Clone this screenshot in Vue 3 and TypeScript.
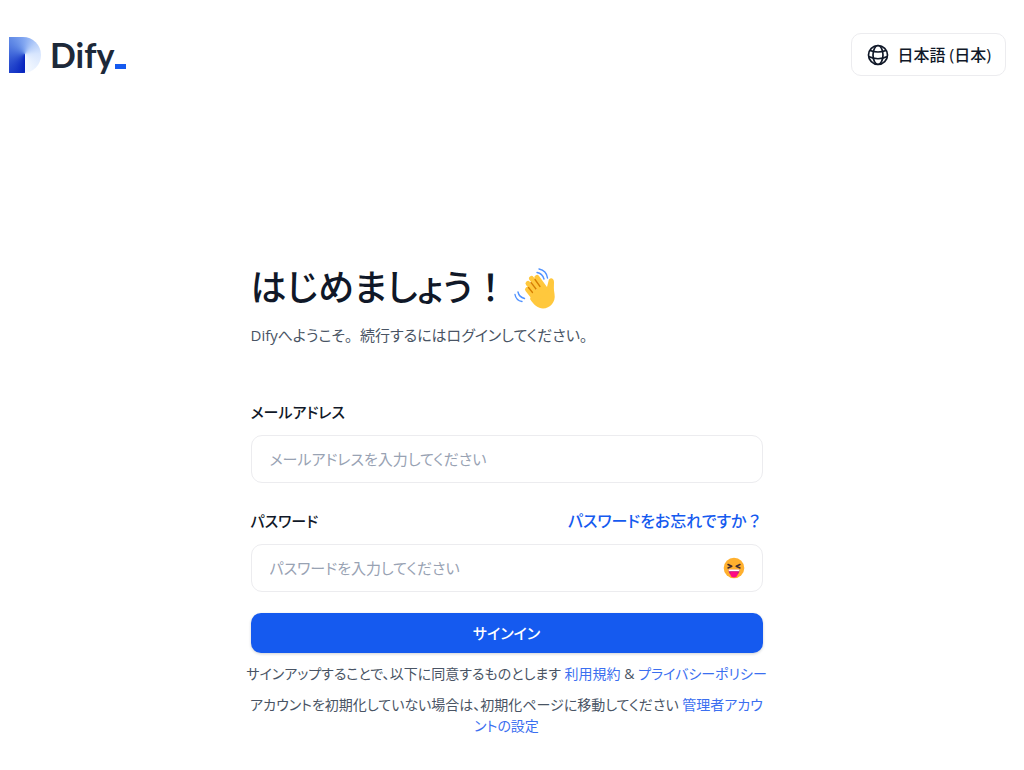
<script setup lang="ts">
import { ref } from 'vue'

const email = ref('')
const password = ref('')
const visible = ref(false)
</script>

<template>
  <div class="page">
    <header class="header">
      <a class="brand" href="#" aria-label="Dify">
        <span class="mark"></span>
        <span class="word">Dify</span><span class="cursor"></span>
      </a>
      <button class="locale" type="button">
        <svg class="globe" viewBox="0 0 22 22" aria-hidden="true">
          <g fill="none" stroke="currentColor" stroke-width="1.7">
            <circle cx="11" cy="11" r="9.5" />
            <ellipse cx="11" cy="11" rx="5" ry="9.5" />
            <path d="M3 6.500Q11 9.500 19 6.500M1.500 12.500Q11 17 20.500 12.500" />
          </g>
        </svg>
        <span>日本語 (日本)</span>
      </button>
    </header>

    <main class="main">
      <h1 class="title">
        <span>はじめましょう<span class="full">！</span></span>
        <svg class="wave" viewBox="0 0 42 42" aria-hidden="true">
          <path d="M19 24 33 20 34.500 14C35 10 40 10.500 40 15C40 19 39.500 22 40.500 27C42 35 36 41.500 29 41.500C24 41.500 20 38 16 32Z" fill="#ffc83d" />
          <g fill="none" stroke="#ffc83d" stroke-linecap="round" stroke-width="5">
            <path d="M13.500 22.500 21 32M14 16.500 25 30M17.500 11.500 29 27M23 10.500 32 23" />
          </g>
          <g fill="none" stroke="#d67d00" stroke-linecap="round" stroke-width="1.3">
            <path d="M14.500 20.500 18.500 25.500M17 15.500 22 22M21 12.500 26 19.500" />
          </g>
          <g fill="none" stroke="#5092ff" stroke-linecap="round" stroke-width="1.4">
            <path d="M23 5.500Q28.500 6.500 30 12M25 2Q32.500 3.500 33.500 11M1 27.500Q2 33.500 8 34.500M4 25Q5 30 10.500 31.500" />
          </g>
        </svg>
      </h1>
      <p class="subtitle">Difyへようこそ<span class="full">。</span>続行するにはログインしてください。</p>

      <form class="form" @submit.prevent>
        <div class="field">
          <label class="label" for="email">メールアドレス</label>
          <input id="email" v-model="email" class="input" type="email" placeholder="メールアドレスを入力してください" />
        </div>
        <div class="field">
          <div class="row">
            <label class="label" for="password">パスワード</label>
            <a class="forgot" href="#">パスワードをお忘れですか<span class="full">？</span></a>
          </div>
          <div class="password">
            <input id="password" v-model="password" class="input" :type="visible ? 'text' : 'password'" placeholder="パスワードを入力してください" />
            <button class="reveal" type="button" aria-label="パスワードを表示" @click="visible = !visible">
              <svg viewBox="0 0 22 22" aria-hidden="true">
                <circle cx="11" cy="11" r="10.300" fill="#ffb02e" />
                <path d="M5 7.500 8.800 9.300 5 11M17 7.500 13.200 9.300 17 11" fill="none" stroke="#402a32" stroke-width="1.500" stroke-linecap="round" stroke-linejoin="round" />
                <path d="M5.500 12.700H16.500Q16.500 18.500 11 18.500Q5.500 18.500 5.500 12.700Z" fill="#bb1d80" />
                <path d="M5.700 12.500H16.300V14.200H5.700Z" fill="#fff" />
                <path d="M7.500 14.800H14.500V17.500Q14.300 20.500 11 20.500Q7.700 20.500 7.500 17.500Z" fill="#ff0a83" />
              </svg>
            </button>
          </div>
        </div>
        <button class="submit" type="submit">サインイン</button>
      </form>

      <p class="note">サインアップすることで、以下に同意するものとします <a href="#">利用規約</a> &amp; <a href="#">プライバシーポリシー</a></p>
      <p class="note">アカウントを初期化していない場合は、初期化ページに移動してください <a href="#">管理者アカウントの設定</a></p>
    </main>
  </div>
</template>

<style>
body { margin: 0; background: #fff; }
</style>

<style scoped>
.page { font-family: "Open Sans", "Noto Sans CJK JP", sans-serif; font-feature-settings: "palt"; color: #101828; }
.full { font-feature-settings: normal; }
.header { display: flex; justify-content: space-between; align-items: center; padding: 33px 18px 0 9px; }
.brand { display: flex; align-items: center; text-decoration: none; }
.mark { width: 32px; height: 36px; border-radius: 0 18px 18px 0; background: conic-gradient(from 180deg at 16px 17px, #0421bd, #4168da 90deg, #618ae6 135deg, #86aaf2 180deg, #b6cef9 225deg, #d8e6fe 270deg, #f6faff 360deg); }
.word { margin-left: 9px; color: #1d2939; font: 700 34px/40px Lato, sans-serif; }
.cursor { width: 11px; height: 5px; margin: 23px 0 0 1px; background: #155aef; }
.locale { display: flex; align-items: center; gap: 8px; height: 43px; padding: 0 14px 0 15px; border: 1px solid #ececef; border-radius: 10px; background: #fff; color: #101828; font: 500 16px/24px "Open Sans", "Noto Sans CJK JP", sans-serif; }
.globe { width: 22px; height: 22px; }
.main { max-width: 512px; margin: 182px auto 0; padding-right: 11px; }
.title { display: flex; align-items: center; gap: 5px; margin: 0; font-size: 36px; line-height: 60px; font-weight: 500; }
.wave { width: 42px; height: 42px; }
.subtitle { margin: 3px 0 0; font-size: 15px; line-height: 28px; color: #495464; }
.form { margin-top: 49px; }
.field { margin-bottom: 25px; }
.field + .field { margin-bottom: 21px; }
.row { display: flex; justify-content: space-between; }
.label { display: block; font-size: 15px; line-height: 28px; font-weight: 500; }
.forgot { color: #155aef; font-size: 16px; line-height: 28px; font-weight: 500; }
.password { position: relative; }
.input { box-sizing: border-box; width: 100%; height: 48px; margin-top: 9px; padding: 0 18px; border: 1px solid #ececef; border-radius: 11px; font: inherit; font-size: 15px; font-feature-settings: inherit; }
.field + .field { margin-top: -1px; }
.password .input { padding-right: 54px; }
.input::placeholder { color: #98a2b3; opacity: 1; }
.reveal { position: absolute; top: 9px; right: 18px; display: flex; align-items: center; height: 48px; padding: 0; border: 0; background: none; }
.reveal svg { width: 22px; height: 22px; }
.submit { display: block; width: 100%; height: 40px; padding: 0 0 2px; border: 0; border-radius: 10px; background: #155aef; box-shadow: 0 1px 3px #10182833; color: #fff; font: inherit; font-size: 15px; font-weight: 500; font-feature-settings: inherit; }
.note { margin: 10px -5px 0; font-size: 14px; line-height: 21px; text-align: center; color: #495464; }
a { color: #3b6ff0; text-decoration: none; }
</style>
